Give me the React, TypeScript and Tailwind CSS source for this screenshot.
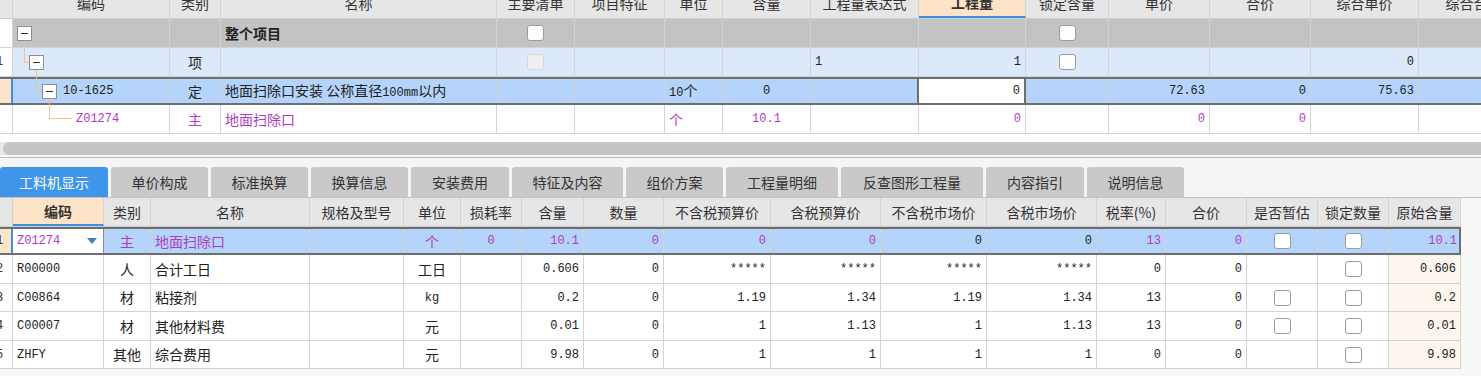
import React from "react";
import clsx from "clsx";

const CJK = "font-['Noto_Sans_CJK_SC',sans-serif] text-[14px]";
const MONO = "font-['Liberation_Mono','Noto_Sans_CJK_SC',monospace] text-[12px]";
const PURPLE = "text-[#b03cc4]";

type Align = "l" | "c" | "r";

interface CellProps {
  w: string;
  align?: Align;
  className?: string;
  children?: React.ReactNode;
}

const Cell: React.FC<CellProps> = ({ w, align = "l", className, children }) => (
  <div
    className={clsx(
      "flex h-full shrink-0 items-center overflow-hidden whitespace-nowrap border-r border-[#d3d3d3] px-[4px]",
      align === "c" && "justify-center",
      align === "r" && "justify-end",
      w,
      className
    )}
  >
    {children}
  </div>
);

const Check = ({ disabled = false }: { disabled?: boolean }) => (
  <span
    className={clsx(
      "block h-[16px] w-[17px] rounded-[3px] border",
      disabled ? "border-[#d6d6d6] bg-[#efefef]" : "border-[#9c9c9c] bg-white"
    )}
  />
);

// partially hidden row number at the left edge
const RowNo = ({ n }: { n: string }) => <span className={clsx(MONO, "-ml-[8px] text-[#333]")}>{n}</span>;

// ---------- top grid ----------
const T = [
  "w-[13px]", "w-[157px]", "w-[51px]", "w-[276px]", "w-[78px]", "w-[90px]", "w-[58px]", "w-[88px]",
  "w-[108px]", "w-[107px]", "w-[83px]", "w-[101px]", "w-[101px]", "w-[108px]", "w-[110px]",
];
const topHead = ["", "编码", "类别", "名称", "主要清单", "项目特征", "单位", "含量", "工程量表达式", "工程量", "锁定含量", "单价", "合价", "综合单价", "综合合价"];

const TreeLines = () => (
  <svg className="pointer-events-none absolute left-[13px] top-0" width="80" height="115" viewBox="0 0 80 115">
    <g stroke="#f7c184" strokeWidth="1" fill="none" shapeRendering="crispEdges">
      <path d="M11.5 21 V43.5 H16" />
      <path d="M23.5 50 V72.5 H29" />
      <path d="M36.5 79 V99.5 H59" />
    </g>
    {[
      [4, 7],
      [16, 36],
      [29, 65],
    ].map(([x, y]) => (
      <g key={`${x}-${y}`}>
        <rect x={x + 0.5} y={y + 0.5} width="14" height="14" fill="#fff" stroke="#8f8f8f" />
        <path d={`M${x + 4} ${y + 7.5} H${x + 11}`} stroke="#333" strokeWidth="1" />
      </g>
    ))}
  </svg>
);

const TopGrid = () => (
  <div className="h-[134px] overflow-hidden">
    {/* header, scrolled partly out of view */}
    <div className="-mt-[11px] flex h-[30px] border-b border-[#cdcdcd] bg-[#e6e6e6] text-[#333]">
      {topHead.map((h, i) => (
        <Cell
          key={i}
          w={T[i]}
          align="c"
          className={clsx(CJK, i === 9 && "border-b-2 border-b-[#3d8fe4] bg-[#fde4c8] font-bold")}
        >
          {h}
        </Cell>
      ))}
    </div>

    <div className="relative">
      {/* 整个项目 */}
      <div className="flex h-[29px] border-b border-[#d3d3d3] bg-[#c3c3c3] text-[#222]">
        <Cell w={T[0]} className="bg-white" />
        <Cell w={T[1]} />
        <Cell w={T[2]} />
        <Cell w={T[3]} className={clsx(CJK, "font-bold")}>整个项目</Cell>
        <Cell w={T[4]} align="c"><Check /></Cell>
        <Cell w={T[5]} />
        <Cell w={T[6]} />
        <Cell w={T[7]} />
        <Cell w={T[8]} />
        <Cell w={T[9]} />
        <Cell w={T[10]} align="c"><Check /></Cell>
        <Cell w={T[11]} />
        <Cell w={T[12]} />
        <Cell w={T[13]} />
        <Cell w={T[14]} />
      </div>

      {/* 项 */}
      <div className="flex h-[29px] border-b border-[#d3d3d3] bg-[#dce9fb] text-[#222]">
        <Cell w={T[0]} className="bg-white"><RowNo n="1" /></Cell>
        <Cell w={T[1]} />
        <Cell w={T[2]} align="c" className={CJK}>项</Cell>
        <Cell w={T[3]} />
        <Cell w={T[4]} align="c"><Check disabled /></Cell>
        <Cell w={T[5]} />
        <Cell w={T[6]} />
        <Cell w={T[7]} />
        <Cell w={T[8]} className={MONO}>1</Cell>
        <Cell w={T[9]} align="r" className={MONO}>1</Cell>
        <Cell w={T[10]} align="c"><Check /></Cell>
        <Cell w={T[11]} />
        <Cell w={T[12]} />
        <Cell w={T[13]} align="r" className={MONO}>0</Cell>
        <Cell w={T[14]} />
      </div>

      {/* selected 定 row */}
      <div className="flex h-[28px] border-y-2 border-[#6e6e6e] bg-[#b4d4fb] text-[#222]">
        <Cell w={T[0]} className="border-r-2 border-r-[#3d8fe4] bg-[#fde4c8]" />
        <Cell w={T[1]} className={clsx(MONO, "pl-[50px]")}>10-1625</Cell>
        <Cell w={T[2]} align="c" className={CJK}>定</Cell>
        <Cell w={T[3]} className={CJK}>
          <span>
            地面扫除口安装 公称直径<span className={MONO}>100mm</span>以内
          </span>
        </Cell>
        <Cell w={T[4]} />
        <Cell w={T[5]} />
        <Cell w={T[6]} className={clsx(CJK, "px-[2px]")}>
          <span>
            <span className={MONO}>10</span>个
          </span>
        </Cell>
        <Cell w={T[7]} align="c" className={MONO}>0</Cell>
        <Cell w={T[8]} className="border-r-2 border-r-[#6e6e6e]" />
        <Cell w={T[9]} align="r" className={clsx(MONO, "border-r-2 border-r-[#6e6e6e] bg-white")}>0</Cell>
        <Cell w={T[10]} />
        <Cell w={T[11]} align="r" className={MONO}>72.63</Cell>
        <Cell w={T[12]} align="r" className={MONO}>0</Cell>
        <Cell w={T[13]} align="r" className={MONO}>75.63</Cell>
        <Cell w={T[14]} />
      </div>

      {/* 主材 row */}
      <div className={clsx("flex h-[29px] border-b border-[#d3d3d3] bg-white", PURPLE)}>
        <Cell w={T[0]} />
        <Cell w={T[1]} className={clsx(MONO, "pl-[63px]")}>Z01274</Cell>
        <Cell w={T[2]} align="c" className={CJK}>主</Cell>
        <Cell w={T[3]} className={CJK}>地面扫除口</Cell>
        <Cell w={T[4]} />
        <Cell w={T[5]} />
        <Cell w={T[6]} className={clsx(CJK, "px-[2px]")}>个</Cell>
        <Cell w={T[7]} align="c" className={MONO}>10.1</Cell>
        <Cell w={T[8]} />
        <Cell w={T[9]} align="r" className={MONO}>0</Cell>
        <Cell w={T[10]} />
        <Cell w={T[11]} align="r" className={MONO}>0</Cell>
        <Cell w={T[12]} align="r" className={MONO}>0</Cell>
        <Cell w={T[13]} />
        <Cell w={T[14]} />
      </div>

      <TreeLines />
    </div>
  </div>
);

// ---------- tabs ----------
const tabs = [
  { label: "工料机显示", w: "w-[108px]" },
  { label: "单价构成", w: "w-[97px]" },
  { label: "标准换算", w: "w-[97px]" },
  { label: "换算信息", w: "w-[97px]" },
  { label: "安装费用", w: "w-[98px]" },
  { label: "特征及内容", w: "w-[111px]" },
  { label: "组价方案", w: "w-[97px]" },
  { label: "工程量明细", w: "w-[112px]" },
  { label: "反查图形工程量", w: "w-[142px]" },
  { label: "内容指引", w: "w-[98px]" },
  { label: "说明信息", w: "w-[97px]" },
];

// ---------- lower grid ----------
const L = [
  "w-[13px]", "w-[91px]", "w-[47px]", "w-[159px]", "w-[94px]", "w-[57px]", "w-[61px]", "w-[62px]", "w-[80px]",
  "w-[107px]", "w-[110px]", "w-[106px]", "w-[110px]", "w-[69px]", "w-[81px]", "w-[71px]", "w-[71px]", "w-[72px]",
];
const lowHead = ["", "编码", "类别", "名称", "规格及型号", "单位", "损耗率", "含量", "数量", "不含税预算价", "含税预算价", "不含税市场价", "含税市场价", "税率(%)", "合价", "是否暂估", "锁定数量", "原始含量"];

type Item = {
  no: string;
  code: string;
  kind: string;
  name: string;
  unit: string;
  unitMono?: boolean;
  qty: string;
  prices: [string, string, string, string];
  tax: string;
  est: boolean;
  h: string;
};

const items: Item[] = [
  { no: "2", code: "R00000", kind: "人", name: "合计工日", unit: "工日", qty: "0.606", prices: ["*****", "*****", "*****", "*****"], tax: "0", est: false, h: "h-[29px]" },
  { no: "3", code: "C00864", kind: "材", name: "粘接剂", unit: "kg", unitMono: true, qty: "0.2", prices: ["1.19", "1.34", "1.19", "1.34"], tax: "13", est: true, h: "h-[28px]" },
  { no: "4", code: "C00007", kind: "材", name: "其他材料费", unit: "元", qty: "0.01", prices: ["1", "1.13", "1", "1.13"], tax: "13", est: true, h: "h-[29px]" },
  { no: "5", code: "ZHFY", kind: "其他", name: "综合费用", unit: "元", qty: "9.98", prices: ["1", "1", "1", "1"], tax: "0", est: false, h: "h-[28px]" },
];

const LowerGrid = () => (
  <div className="w-[1461px]">
    <div className="flex h-[29px] border-b border-[#cdcdcd] bg-[#e6e6e6] text-[#333]">
      {lowHead.map((h, i) => (
        <Cell
          key={i}
          w={L[i]}
          align="c"
          className={clsx(CJK, i === 1 && "border-b-2 border-b-[#3d8fe4] bg-[#fde4c8] font-bold")}
        >
          {h}
        </Cell>
      ))}
    </div>

    {/* selected 主材 row */}
    <div className={clsx("flex h-[28px] border-y-2 border-r-2 border-[#6e6e6e] bg-[#b4d4fb]", PURPLE)}>
      <Cell w={L[0]} className="border-r-2 border-r-[#3d8fe4] bg-[#fde4c8]"><RowNo n="1" /></Cell>
      <Cell w={L[1]} className={clsx(MONO, "justify-between border-r-[#8a8a8a] bg-white pr-[6px]")}>
        <span>Z01274</span>
        <svg width="10" height="6" viewBox="0 0 10 6">
          <path d="M0 0 H10 L5 6 Z" fill="#4d7ea9" />
        </svg>
      </Cell>
      <Cell w={L[2]} align="c" className={CJK}>主</Cell>
      <Cell w={L[3]} className={CJK}>地面扫除口</Cell>
      <Cell w={L[4]} />
      <Cell w={L[5]} align="c" className={CJK}>个</Cell>
      <Cell w={L[6]} align="c" className={MONO}>0</Cell>
      <Cell w={L[7]} align="r" className={MONO}>10.1</Cell>
      <Cell w={L[8]} align="r" className={MONO}>0</Cell>
      <Cell w={L[9]} align="r" className={MONO}>0</Cell>
      <Cell w={L[10]} align="r" className={MONO}>0</Cell>
      <Cell w={L[11]} align="r" className={clsx(MONO, "text-[#222]")}>0</Cell>
      <Cell w={L[12]} align="r" className={clsx(MONO, "text-[#222]")}>0</Cell>
      <Cell w={L[13]} align="r" className={MONO}>13</Cell>
      <Cell w={L[14]} align="r" className={MONO}>0</Cell>
      <Cell w={L[15]} align="c"><Check /></Cell>
      <Cell w={L[16]} align="c"><Check /></Cell>
      <Cell w={L[17]} align="r" className={clsx(MONO, "w-[70px] border-r-0")}>10.1</Cell>
    </div>

    {items.map((it) => (
      <div key={it.code} className={clsx("flex border-b border-[#d3d3d3] bg-white text-[#222]", it.h)}>
        <Cell w={L[0]}><RowNo n={it.no} /></Cell>
        <Cell w={L[1]} className={MONO}>{it.code}</Cell>
        <Cell w={L[2]} align="c" className={CJK}>{it.kind}</Cell>
        <Cell w={L[3]} className={CJK}>{it.name}</Cell>
        <Cell w={L[4]} />
        <Cell w={L[5]} align="c" className={it.unitMono ? MONO : CJK}>{it.unit}</Cell>
        <Cell w={L[6]} />
        <Cell w={L[7]} align="r" className={MONO}>{it.qty}</Cell>
        <Cell w={L[8]} align="r" className={MONO}>0</Cell>
        {it.prices.map((p, i) => (
          <Cell key={i} w={L[9 + i]} align="r" className={MONO}>{p}</Cell>
        ))}
        <Cell w={L[13]} align="r" className={MONO}>{it.tax}</Cell>
        <Cell w={L[14]} align="r" className={MONO}>0</Cell>
        <Cell w={L[15]} align="c">{it.est && <Check />}</Cell>
        <Cell w={L[16]} align="c"><Check /></Cell>
        <Cell w={L[17]} align="r" className={clsx(MONO, "bg-[#fdf6ee]")}>{it.qty}</Cell>
      </div>
    ))}
  </div>
);

export default function App() {
  return (
    <div className="h-[376px] w-[1481px] overflow-hidden bg-white">
      <TopGrid />

      {/* horizontal scrollbar */}
      <div className="h-[8px] bg-white" />
      <div className="h-[13px] bg-[#e9e9e9] pl-[3px]">
        <div className="h-full rounded-l-full bg-[#c5c5c5]" />
      </div>
      <div className="h-[2px] bg-[#f6f6f6]" />
      <div className="h-[1px] bg-[#bdbdbd]" />

      {/* tab strip + detail grid */}
      <div className="bg-[#f5f5f5]">
        <div className="flex h-[40px] items-end gap-[3px] border-b border-[#c4c4c4] pt-[9px]">
          {tabs.map((t, i) => (
            <div
              key={t.label}
              className={clsx(
                "flex h-full shrink-0 items-center justify-center rounded-t-[3px]",
                CJK,
                t.w,
                i === 0 ? "bg-[#3f95ea] text-white" : "bg-[#c9c9c9] text-[#333]"
              )}
            >
              {t.label}
            </div>
          ))}
        </div>
        <div className="h-[178px] bg-[#f7f7f7]">
          <LowerGrid />
        </div>
      </div>
    </div>
  );
}
